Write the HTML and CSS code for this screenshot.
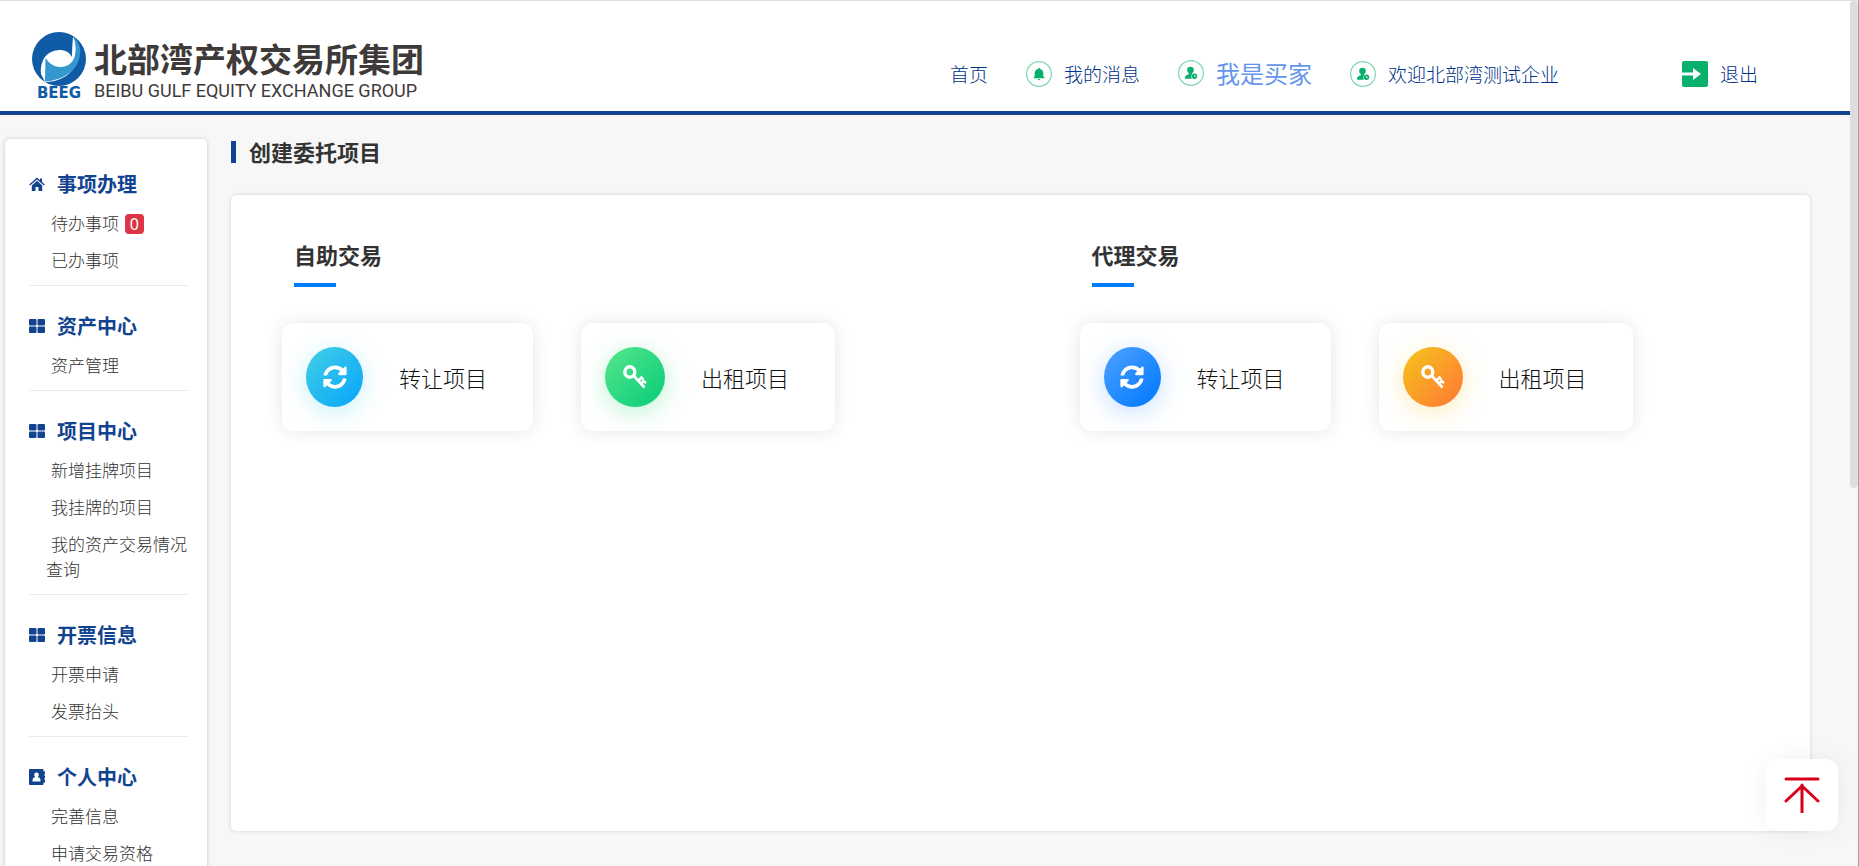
FILE: index.html
```html
<!DOCTYPE html>
<html lang="zh-CN">
<head>
<meta charset="UTF-8">
<meta name="viewport" content="width=device-width, initial-scale=1">
<title>创建委托项目</title>
<link rel="stylesheet" href="styles.css">
</head>
<body>

<!-- 公用图标 -->
<svg class="sprite" aria-hidden="true">
    <symbol id="i-grid" viewBox="0 0 16 16">
        <rect x="0" y="1" width="7.500" height="6.500" rx="1"/><rect x="8.500" y="1" width="7.500" height="6.500" rx="1"/>
        <rect x="0" y="8.500" width="7.500" height="6.500" rx="1"/><rect x="8.500" y="8.500" width="7.500" height="6.500" rx="1"/>
    </symbol>
    <symbol id="i-user" viewBox="0 0 26 26">
        <circle cx="13" cy="13" r="12.4" fill="#fff" stroke="#7fd6b0" stroke-width="1.2"/>
        <circle cx="12.5" cy="10" r="3.3"/>
        <path d="M10.800 12h3.400v2.600c-.8.8-1 1.600-.8 2.900.1.500.3.900.6 1.300H7v-1.200c0-1.800 1.700-2.800 3.800-3.400z"/>
        <circle cx="16.500" cy="16.300" r="2.700"/>
        <path d="M16.500 15v1.500h1.500" fill="none" stroke="#fff" stroke-width=".7"/>
    </symbol>
    <symbol id="i-sync" viewBox="0 0 512 512">
        <path d="M370.72 133.28C339.458 104.008 298.888 87.962 255.848 88c-77.458.068-144.328 53.178-162.791 126.850-1.344 5.363-6.122 9.150-11.651 9.150H24.103c-7.498 0-13.194-6.807-11.807-14.176C33.933 94.924 134.813 8 256 8c66.448 0 126.791 26.136 171.315 68.685L463.030 40.970C478.149 25.851 504 36.559 504 57.941V192c0 13.255-10.745 24-24 24H345.941c-21.382 0-32.090-25.851-16.971-40.971l41.750-41.749zM32 296h134.059c21.382 0 32.090 25.851 16.971 40.971l-41.750 41.750c31.262 29.273 71.835 45.319 114.876 45.280 77.418-.070 144.315-53.144 162.787-126.849 1.344-5.363 6.122-9.150 11.651-9.150h57.304c7.498 0 13.194 6.807 11.807 14.176C478.067 417.076 377.187 504 256 504c-66.448 0-126.791-26.136-171.315-68.685L48.970 471.030C33.851 486.149 8 475.441 8 454.059V320c0-13.255 10.745-24 24-24z"/>
    </symbol>
    <symbol id="i-key" viewBox="0 0 24 24">
        <path d="M10 10L21.500 22.500M15.500 15.500l3-3 1.800 1.800M18 18.500l2.500-2.500 2.500 2" fill="none" stroke="#fff" stroke-width="2.600"/>
        <ellipse cx="6.800" cy="7" rx="5" ry="5.200" fill="none" stroke="#fff" stroke-width="3.400"/>
    </symbol>
</svg>

<header class="header">
    <a class="logo" href="#">
        <svg class="logo-mark" viewBox="0 0 54 66">
            <circle cx="27" cy="27" r="27" fill="#0f5ba6"/>
            <path d="M41 5c4 5 6 12 5 20-2 15-16 25-33 25L9 42c-1-9 2-18 10-22 8-4 18-2 21 5z" fill="#fff"/>
            <path d="M13.500 26c4 6 9 9 15 9 7 0 12-4 14-10 2-7 1-14-1-20 6 5 8 12 6 20-3 15-17 23-34.500 24.500z" fill="#3498cf"/>
            <path d="M41 5c3 9 3 16 0 22l-1 1z" fill="#fff"/>
            <text x="27" y="66" text-anchor="middle" class="logo-abbr">BEEG</text>
        </svg>
        <span class="logo-text">
            <span class="logo-cn">北部湾产权交易所集团</span>
            <span class="logo-en">BEIBU GULF EQUITY EXCHANGE GROUP</span>
        </span>
    </a>
    <nav class="nav">
        <a href="#">首页</a>
        <a href="#">
            <svg class="nav-icon" viewBox="0 0 26 26">
                <circle cx="13" cy="13" r="12.400" fill="#fff" stroke="#7fd6b0" stroke-width="1.200"/>
                <path d="M13 7c.6 0 1 .4 1 .9 2 .5 3.300 2 3.300 4.200v3l1.200 1.600v.5h-11v-.5l1.200-1.600v-3c0-2.200 1.300-3.700 3.300-4.200 0-.5.400-.9 1-.9zM11.800 18h2.400c0 .8-.5 1.200-1.200 1.200s-1.200-.4-1.200-1.200z"/>
            </svg>
            我的消息
        </a>
        <a class="role" href="#"><svg class="nav-icon"><use href="#i-user"/></svg>我是买家</a>
        <a href="#"><svg class="nav-icon"><use href="#i-user"/></svg>欢迎北部湾测试企业</a>
        <a class="logout" href="#">
            <svg class="nav-icon" viewBox="0 0 26 26">
                <rect width="26" height="26" rx="2"/>
                <path d="M0 11.500h11V7l8 6-8 6v-4.500H0z" fill="#fff"/>
            </svg>
            退出
        </a>
    </nav>
</header>

<div class="wrap">
    <aside class="sidebar">
        <section class="group">
            <h3>
                <svg class="menu-icon" viewBox="0 0 16 16"><path d="M8 1.500l3 2.700V2.500h2v3.500l2.800 2.600-.9 1L8 3.500 1.100 9.600l-.9-1zM8 4.800l5.200 4.600V15H9.500v-4h-3v4H2.800V9.400z"/></svg>
                事项办理
            </h3>
            <ul>
                <li><a href="#">待办事项</a> <span class="badge">0</span></li>
                <li><a href="#">已办事项</a></li>
            </ul>
        </section>
        <section class="group">
            <h3><svg class="menu-icon"><use href="#i-grid"/></svg>资产中心</h3>
            <ul>
                <li><a href="#">资产管理</a></li>
            </ul>
        </section>
        <section class="group">
            <h3><svg class="menu-icon"><use href="#i-grid"/></svg>项目中心</h3>
            <ul>
                <li><a href="#">新增挂牌项目</a></li>
                <li><a href="#">我挂牌的项目</a></li>
                <li><a href="#">我的资产交易情况查询</a></li>
            </ul>
        </section>
        <section class="group">
            <h3><svg class="menu-icon"><use href="#i-grid"/></svg>开票信息</h3>
            <ul>
                <li><a href="#">开票申请</a></li>
                <li><a href="#">发票抬头</a></li>
            </ul>
        </section>
        <section class="group">
            <h3>
                <svg class="menu-icon" viewBox="0 0 16 16">
                    <path d="M1 0h12.500a1 1 0 011 1v1.500H16v3h-1v1h1v3h-1v1h1v3h-1.500V15a1 1 0 01-1 1H1a1 1 0 01-1-1V1a1 1 0 011-1z"/>
                    <path d="M7.500 3.500a2.300 2.300 0 012.300 2.300c0 1-.4 1.700-1 2.200 1.700.3 2.700 1.500 2.700 3.500v1h-8v-1c0-2 1-3.200 2.700-3.500-.6-.5-1-1.200-1-2.200a2.300 2.300 0 012.300-2.300z" fill="#fff"/>
                </svg>
                个人中心
            </h3>
            <ul>
                <li><a href="#">完善信息</a></li>
                <li><a href="#">申请交易资格</a></li>
            </ul>
        </section>
    </aside>

    <main class="main">
        <h1 class="page-title">创建委托项目</h1>
        <div class="panel">
            <section class="trade">
                <h2>自助交易</h2>
                <div class="cards">
                    <a class="card" href="#"><span class="round cyan"><svg><use href="#i-sync"/></svg></span>转让项目</a>
                    <a class="card" href="#"><span class="round green"><svg><use href="#i-key"/></svg></span>出租项目</a>
                </div>
            </section>
            <section class="trade">
                <h2>代理交易</h2>
                <div class="cards">
                    <a class="card" href="#"><span class="round blue"><svg><use href="#i-sync"/></svg></span>转让项目</a>
                    <a class="card" href="#"><span class="round orange"><svg><use href="#i-key"/></svg></span>出租项目</a>
                </div>
            </section>
        </div>
    </main>
</div>

<button class="to-top" type="button" aria-label="返回顶部">
    <svg viewBox="0 0 36 36"><path d="M2 2h32M18 8v27M2 24L18 9l16 15"/></svg>
</button>
<div class="scroll-thumb"></div>

</body>
</html>
```
FILE: styles.css
```css
* {
    box-sizing: border-box;
}

body {
    margin: 0;
    height: 100vh;
    overflow: hidden;
    padding-right: 8px;
    border-top: 1px solid #e0e0e0;
    border-right: 1px solid #a0a0a0;
    background: #f7f7f7;
    color: #333;
    font-family: "Noto Sans CJK SC", sans-serif;
    font-weight: 300;
}

a {
    color: inherit;
    text-decoration: none;
}

h1, h2, h3, ul {
    margin: 0;
    padding: 0;
}

ul {
    list-style: none;
}

.sprite {
    display: none;
}

/* 顶部 */
.header {
    display: flex;
    justify-content: space-between;
    align-items: flex-start;
    height: 114px;
    padding: 31px 92px 0 32px;
    border-bottom: 4px solid #12438f;
    background: #fff;
}

.logo {
    display: flex;
    gap: 8px;
}

.logo-mark {
    width: 54px;
    height: 66px;
    overflow: visible;
}

.logo-abbr {
    font: bold 15px "DejaVu Sans", sans-serif;
    fill: #0f5ba6;
}

.logo-text {
    display: flex;
    flex-direction: column;
    gap: 2px;
    padding-top: 6px;
    color: #3e3a39;
    white-space: nowrap;
}

.logo-cn {
    font-size: 33px;
    font-weight: 700;
    line-height: 40px;
}

.logo-en {
    font: 18px/22px Roboto, sans-serif;
}

.nav {
    display: flex;
    gap: 38px;
    height: 36px;
    margin-top: 24px;
    color: #003387;
    font-size: 19px;
    line-height: 26px;
    white-space: nowrap;
}

.nav a {
    display: flex;
    align-items: center;
    gap: 12px;
}

.nav .role {
    padding-bottom: 2px;
    color: #6495ed;
    font-size: 24px;
    font-weight: 400;
}

.nav .logout {
    margin-left: 85px;
}

.nav-icon {
    width: 26px;
    height: 26px;
    fill: #09b06b;
}

/* 主体 */
.wrap {
    display: flex;
    align-items: flex-start;
    gap: 24px;
    padding: 24px 40px 0 5px;
}

.sidebar {
    flex: none;
    width: 202px;
    padding: 5px 18px 24px 24px;
    border-radius: 5px;
    background: #fff;
    box-shadow: 0 0 4px rgba(0, 0, 0, 0.2);
}

.group {
    padding: 24px 0 7px;
    border-bottom: 1px solid #ececec;
}

.group h3 {
    display: flex;
    align-items: center;
    gap: 12px;
    margin-bottom: 4px;
    color: #12438f;
    font-size: 20px;
    font-weight: 700;
    line-height: 32px;
}

.menu-icon {
    width: 16px;
    height: 16px;
    fill: #12438f;
}

.group li {
    padding: 6px 0 6px 17px;
    color: #333;
    font-size: 17px;
    line-height: 25px;
    text-indent: 5px;
}

.badge {
    display: inline-block;
    width: 19px;
    height: 20px;
    margin-left: 2px;
    border-radius: 4px;
    background: #dc3545;
    color: #fff;
    font: 16px/20px "Noto Sans", sans-serif;
    text-align: center;
    text-indent: 0;
}

.main {
    flex: 1;
}

.page-title {
    margin-top: 2px;
    padding: 0 0 2px 13px;
    border-left: 5px solid #12438f;
    font-size: 22px;
    line-height: 20px;
}

.panel {
    display: grid;
    grid-template-columns: 54% 1fr;
    min-height: 636px;
    margin-top: 32px;
    padding: 44px 51px;
    border-radius: 5px;
    background: #fff;
    box-shadow: 0 0 4px rgba(0, 0, 0, 0.15);
}

.trade h2 {
    margin-left: 12px;
    font-size: 22px;
    line-height: 30px;
}

.trade h2::after {
    content: "";
    display: block;
    width: 42px;
    height: 4px;
    margin-top: 14px;
    background: #007bff;
}

.cards {
    display: flex;
    gap: 48px;
    margin-top: 36px;
}

.card {
    display: flex;
    align-items: center;
    gap: 36px;
    height: 108px;
    padding: 0 46px 0 24px;
    border-radius: 12px;
    background: #fff;
    box-shadow: 0 0 18px rgba(0, 0, 0, 0.1);
    color: #111;
    font-size: 22px;
    white-space: nowrap;
}

.round {
    display: flex;
    align-items: center;
    justify-content: center;
    width: 60px;
    height: 60px;
    border-radius: 50%;
}

.round svg {
    width: 24px;
    height: 24px;
    fill: #fff;
}

.cyan {
    width: 57px;
    background: linear-gradient(135deg, #43cfe6, #05a5fb);
    box-shadow: 0 5px 24px rgba(67, 207, 230, 0.3);
}

.green {
    background: linear-gradient(135deg, #55e68c, #08cb78);
    box-shadow: 0 5px 24px rgba(67, 220, 130, 0.35);
}

.blue {
    width: 57px;
    background: linear-gradient(135deg, #4da2ff, #0077ff);
    box-shadow: 0 5px 24px rgba(60, 150, 255, 0.3);
}

.orange {
    background: linear-gradient(135deg, #f5c51c, #ff7635);
    box-shadow: 0 5px 24px rgba(245, 200, 60, 0.35);
}

/* 返回顶部 */
.to-top {
    position: fixed;
    right: 21px;
    bottom: 35px;
    width: 72px;
    height: 72px;
    padding: 18px;
    border: 0;
    border-radius: 12px;
    background: #fff;
    box-shadow: 0 0 24px rgba(0, 0, 0, 0.06);
}

.to-top svg {
    display: block;
    width: 36px;
    height: 36px;
    fill: none;
    stroke: #d9001b;
    stroke-width: 3;
    stroke-linecap: round;
}

.scroll-thumb {
    position: fixed;
    top: 1px;
    right: 1px;
    width: 8px;
    height: 487px;
    border-radius: 4px;
    background: #dedede;
}
```
